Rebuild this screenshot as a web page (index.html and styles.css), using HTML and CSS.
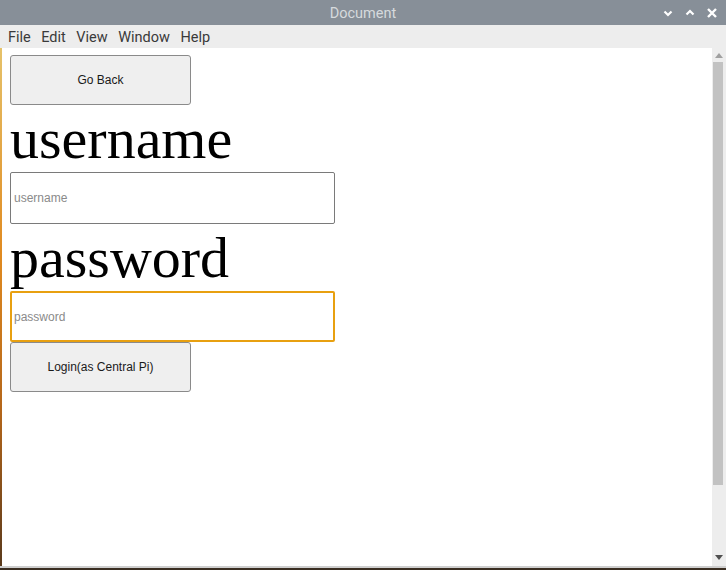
FILE: index.html
```html
<!DOCTYPE html>
<html>
<head>
<meta charset="utf-8">
<title>Document</title>
<link rel="stylesheet" href="styles.css">
</head>
<body>
<div class="window">
  <div class="titlebar">
    <span class="title">Document</span>
    <div class="controls">
      <svg width="12" height="12" viewBox="0 0 12 12"><path d="M2.5 4.5 L6 8 L9.5 4.5" fill="none" stroke="#fff" stroke-width="2.2"/></svg>
      <svg width="12" height="12" viewBox="0 0 12 12"><path d="M2.5 7.5 L6 4 L9.5 7.5" fill="none" stroke="#fff" stroke-width="2.2"/></svg>
      <svg width="12" height="12" viewBox="0 0 12 12"><path d="M2 2 L10 10 M10 2 L2 10" fill="none" stroke="#fff" stroke-width="2.4"/></svg>
    </div>
  </div>
  <div class="menubar">
    <span>File</span><span>Edit</span><span>View</span><span>Window</span><span>Help</span>
  </div>
  <div class="body">
    <div class="edge"></div>
    <div class="content">
      <div class="page">
        <button class="btn">Go Back</button>
        <div class="heading">username</div>
        <input class="field" type="text" placeholder="username">
        <div class="heading">password</div>
        <input class="field focused" type="password" placeholder="password">
        <button class="btn">Login(as Central Pi)</button>
      </div>
    </div>
    <div class="scrollbar">
      <div class="arrow up"></div>
      <div class="track"><div class="thumb"></div></div>
      <div class="arrow down"></div>
    </div>
  </div>
  <div class="bottom"></div>
</div>
</body>
</html>
```
FILE: styles.css
```css
html, body {
  margin: 0;
  padding: 0;
  width: 726px;
  height: 570px;
  overflow: hidden;
  background: #2b2118;
}
.window {
  width: 726px;
  height: 570px;
  display: flex;
  flex-direction: column;
}
.titlebar {
  height: 25px;
  background: #878f98;
  position: relative;
  display: flex;
  align-items: center;
  justify-content: center;
}
.title {
  font-family: Roboto, "Liberation Sans", sans-serif;
  font-size: 14.5px;
  color: #d6dadd;
  padding-top: 2px;
}
.controls {
  position: absolute;
  right: 8px;
  top: 7px;
  display: flex;
  gap: 10px;
}
.controls svg { display: block; }
.menubar {
  height: 23px;
  box-sizing: border-box;
  padding-top: 1px;
  background: #ededed;
  display: flex;
  align-items: center;
  padding-left: 8px;
  gap: 10.5px;
  font-family: Roboto, "Liberation Sans", sans-serif;
  font-size: 14.5px;
  color: #3a3a3a;
}
.body {
  flex: 1;
  display: flex;
  background: #ffffff;
  min-height: 0;
}
.edge {
  width: 2px;
  background: linear-gradient(#e6c26a, #e08a20 40%, #b4661a 70%, #5a3a1c);
}
.content {
  flex: 1;
  background: #fff;
}
.page {
  padding: 7px 8px 8px 8px;
  display: flex;
  flex-direction: column;
  align-items: flex-start;
}
.btn {
  width: 181px;
  height: 50px;
  margin: 0;
  background: #efefef;
  border: 1px solid #8a8a8a;
  border-radius: 3px;
  font-family: "Liberation Sans", Arial, sans-serif;
  font-size: 12px;
  color: #1a1a1a;
  padding: 0;
}
.heading {
  font-family: "Liberation Serif", "Times New Roman", serif;
  font-size: 58px;
  line-height: 67px;
  height: 67px;
  color: #000;
}
.field {
  box-sizing: border-box;
  width: 325px;
  height: 52px;
  margin: 0;
  border: 1px solid #7a7a7a;
  border-radius: 2px;
  padding: 0 3px;
  font-family: "Liberation Sans", Arial, sans-serif;
  font-size: 12px;
  outline: none;
  background: #fff;
}
.field::placeholder { color: #8a8a8a; }
.field.focused {
  border: 2px solid #e8a010;
  padding: 0 2px;
  height: 51px;
}
.scrollbar {
  width: 14px;
  background: #ededed;
  display: flex;
  flex-direction: column;
  align-items: center;
}
.arrow {
  width: 0;
  height: 0;
  border-left: 4px solid transparent;
  border-right: 4px solid transparent;
}
.arrow.up {
  border-bottom: 5px solid #a0a0a0;
  margin-top: 5px;
}
.arrow.down {
  border-top: 5px solid #505050;
  margin-bottom: 6px;
}
.track {
  flex: 1;
  width: 100%;
  padding: 4px 1px 0 1px;
  box-sizing: border-box;
}
.thumb {
  height: 423px;
  background: #c2c2c2;
  margin-right: 2px;
}
.bottom {
  height: 4px;
  background: linear-gradient(#cfcfcf 0 2px, #3a2e22 2px);
}
```
